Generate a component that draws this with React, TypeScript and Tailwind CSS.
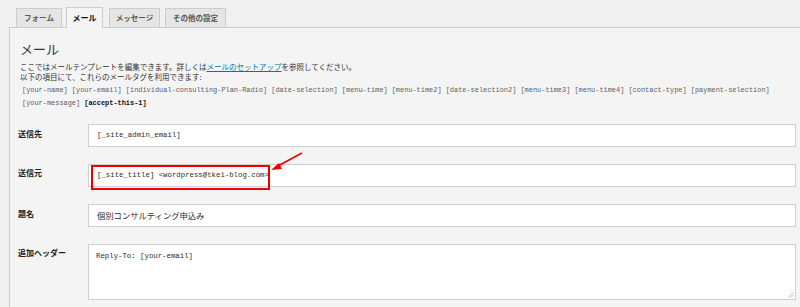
import React from "react";

const JP = { fontFamily: '"Noto Sans CJK JP", "Noto Sans", sans-serif' };
const MONO = { fontFamily: '"Liberation Mono", "DejaVu Sans Mono", monospace' };

function Tab({ label, w, active }: { label: string; w: string; active?: boolean }) {
  if (active) {
    return (
      <div
        className={`${w} h-[21px] mb-[-1px] relative z-10 border border-b-0 border-[#cccccc] bg-[#f4f4f4] flex items-center justify-center text-[8px] font-bold text-[#111]`}
        style={JP}
      >
        {label}
      </div>
    );
  }
  return (
    <div
      className={`${w} h-[19px] border border-b-0 border-[#cccccc] bg-[#e5e5e5] flex items-center justify-center text-[7.5px] font-bold text-[#5a5a5a]`}
      style={JP}
    >
      {label}
    </div>
  );
}

function Row({ label, children, pt }: { label: string; children: React.ReactNode; pt: string }) {
  return (
    <div className="flex">
      <div className={`w-[70px] shrink-0 ${pt} text-[8px] leading-[10px] font-bold text-[#222]`} style={JP}>
        {label}
      </div>
      <div className="flex-1 relative">{children}</div>
    </div>
  );
}

function Input({ children, jp }: { children: React.ReactNode; jp?: boolean }) {
  return (
    <div
      className={`h-[23px] w-[708px] bg-white border border-[#cfcfcf] flex items-center pl-[8px] text-[#2c2c2c] ${jp ? "text-[8.3px]" : "text-[7.35px]"}`}
      style={jp ? JP : MONO}
    >
      {children}
    </div>
  );
}

export default function App() {
  return (
    <div className="w-[800px] h-[307px] bg-[#f0f0f0] overflow-hidden">
      <div className="h-[27px] flex items-end pl-[16px]">
        <Tab label="フォーム" w="w-[46px]" />
        <div className="w-[4px]" />
        <Tab label="メール" w="w-[37px]" active />
        <div className="w-[6px]" />
        <Tab label="メッセージ" w="w-[51px]" />
        <div className="w-[5px]" />
        <Tab label="その他の設定" w="w-[61px]" />
      </div>
      <div className="ml-[9px] border-l border-t border-[#cccccc] bg-[#f4f4f4] h-[400px] pl-[8px] pt-[13px]">
        <div className="pl-[2px]">
          <div className="text-[13px] leading-[16px] text-[#333]" style={JP}>
            メール
          </div>
          <div className="mt-[5px] text-[7.5px] leading-[10px] text-[#333]" style={JP}>
            <div>
              ここではメールテンプレートを編集できます。詳しくは
              <span className="text-[#0073aa] underline">メールのセットアップ</span>
              を参照してください。
            </div>
            <div>以下の項目にて、これらのメールタグを利用できます:</div>
          </div>
          <div className="mt-[2px] pl-[2px] text-[6.93px] leading-[12.5px] text-[#5e5e5e] w-[770px]" style={MONO}>
            <div className="whitespace-nowrap">
              [your-name] [your-email] [individual-consulting-Plan-Radio] [date-selection] [menu-time] [menu-time2] [date-selection2] [menu-time3] [menu-time4] [contact-type] [payment-selection]
            </div>
            <div className="whitespace-nowrap">
              [your-message] <span className="font-bold text-[#111]">[accept-this-1]</span>
            </div>
          </div>
        </div>

        <div className="mt-[15px] flex flex-col gap-[17px]">
          <Row label="送信先" pt="pt-[5px]">
            <Input>[_site_admin_email]</Input>
          </Row>
          <Row label="送信元" pt="pt-[4px]">
            <Input>[_site_title] &lt;wordpress@tkei-blog.com&gt;</Input>
            <div className="absolute left-[3px] top-[1px] w-[179px] h-[25px] border-2 border-[#ee0000]" />
            <svg
              className="absolute left-[178px] top-[-13px]"
              width="40"
              height="24"
              viewBox="0 0 40 24"
            >
              <line x1="36" y1="2" x2="10" y2="16" stroke="#ee0000" strokeWidth="1.6" />
              <polygon points="5,19 13,12 16,18" fill="#ee0000" />
            </svg>
          </Row>
          <Row label="題名" pt="pt-[5px]">
            <Input jp>個別コンサルティング申込み</Input>
          </Row>
          <Row label="追加ヘッダー" pt="pt-[4px]">
            <div
              className="h-[56px] w-[708px] bg-white border border-[#cfcfcf] pl-[7px] pt-[6px] text-[7.35px] leading-[10px] text-[#2c2c2c] relative"
              style={MONO}
            >
              Reply-To: [your-email]
              <svg className="absolute right-[1px] bottom-[1px]" width="6" height="6" viewBox="0 0 6 6">
                <line x1="5.5" y1="0.5" x2="0.5" y2="5.5" stroke="#aaa" strokeWidth="0.8" />
                <line x1="5.5" y1="3" x2="3" y2="5.5" stroke="#aaa" strokeWidth="0.8" />
              </svg>
            </div>
          </Row>
        </div>
      </div>
    </div>
  );
}
